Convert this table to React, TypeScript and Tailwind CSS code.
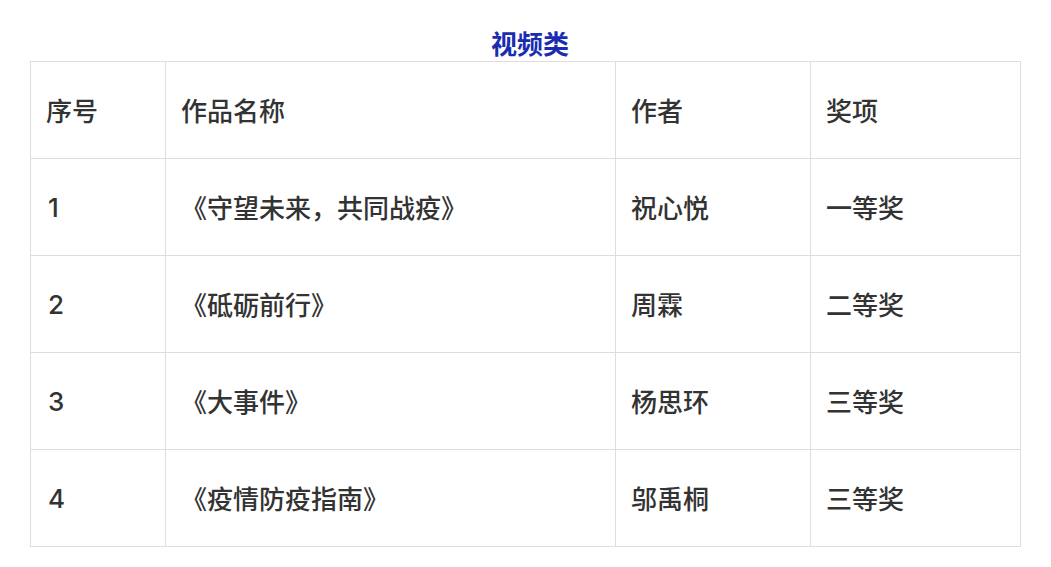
import React from "react";

interface Row {
  no: string;
  name: string;
  author: string;
  award: string;
}

const rows: Row[] = [
  { no: "1", name: "《守望未来，共同战疫》", author: "祝心悦", award: "一等奖" },
  { no: "2", name: "《砥砺前行》", author: "周霖", award: "二等奖" },
  { no: "3", name: "《大事件》", author: "杨思环", award: "三等奖" },
  { no: "4", name: "《疫情防疫指南》", author: "邬禹桐", award: "三等奖" },
];

const cell = "border border-[#dddddd] px-[15px] h-[97px] align-middle text-left font-medium";

export default function App() {
  return (
    <div
      className="min-h-screen bg-white px-[30px] pt-[26px] text-[#333333]"
      style={{ fontFamily: '"Noto Sans CJK SC", "Noto Sans", sans-serif' }}
    >
      <h2 className="h-[35px] w-[991px] pl-[9px] text-center text-[26px] font-bold leading-[34px] text-[#1a2db0]">视频类</h2>
      <table className="w-[990px] table-fixed border-collapse text-[26px] leading-[34px]">
        <colgroup>
          <col className="w-[135px]" />
          <col className="w-[450px]" />
          <col className="w-[195px]" />
          <col className="w-[210px]" />
        </colgroup>
        <thead>
          <tr>
            <th className={cell}>序号</th>
            <th className={cell}>作品名称</th>
            <th className={cell}>作者</th>
            <th className={cell}>奖项</th>
          </tr>
        </thead>
        <tbody>
          {rows.map((r) => (
            <tr key={r.no}>
              <td className={cell}>
                <span className="pl-[2px] font-medium" style={{ fontFamily: "Inter, sans-serif" }}>
                  {r.no}
                </span>
              </td>
              <td className={cell}>{r.name}</td>
              <td className={cell}>{r.author}</td>
              <td className={cell}>{r.award}</td>
            </tr>
          ))}
        </tbody>
      </table>
    </div>
  );
}
